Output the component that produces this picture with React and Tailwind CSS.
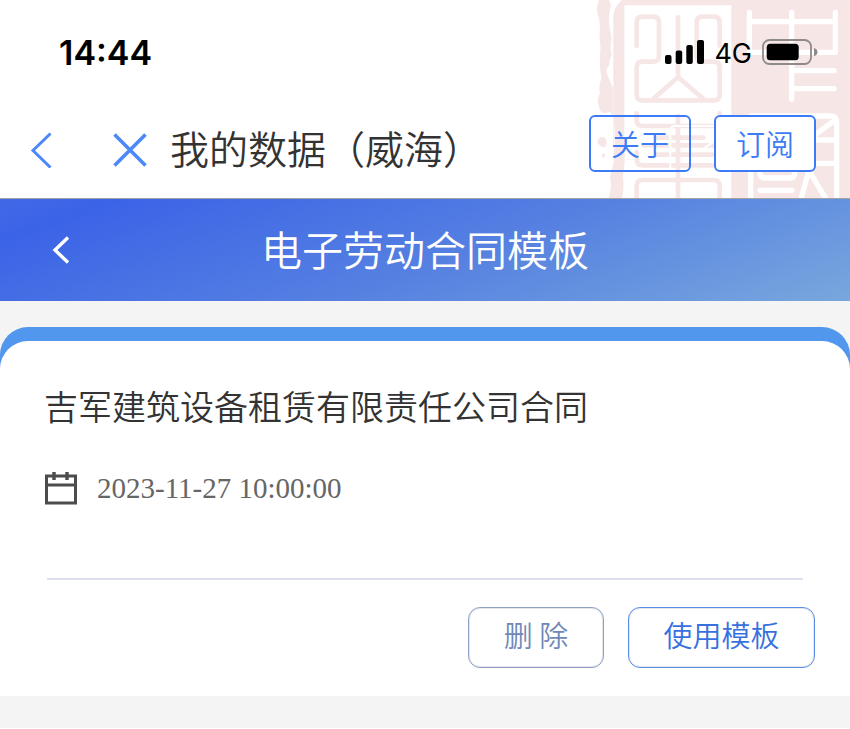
import { useState } from "react";

const contracts = [
	{
		id: 1,
		name: "吉军建筑设备租赁有限责任公司合同",
		date: "2023-11-27 10:00:00",
	},
];

function SealMark() {
	return (
		<svg
			className="absolute right-0 top-0 h-full w-[260px]"
			viewBox="0 0 780 594"
			preserveAspectRatio="xMaxYMin slice"
			fill="none"
			aria-hidden="true"
		>
			{/* rough left edge */}
			<path
				fill="#f6e6e6"
				d="M28 0H56Q66 12 60 30Q54 60 60 90Q68 116 62 130Q60 150 66 166Q56 180 58 196Q46 206 50 218Q58 240 68 262Q72 282 70 300V594H58Q66 560 60 530Q74 490 70 450Q76 400 70 350Q60 330 50 338Q30 344 26 316Q20 300 30 280Q24 262 34 236Q28 200 30 170Q34 140 28 110Q34 70 22 40Q18 18 28 0Z"
			/>
			<path fill="#f6e6e6" d="M30 412Q44 408 50 422Q52 440 42 442Q24 438 22 424ZM36 462Q46 458 46 468Q40 476 36 470Z" />
			<path
				fill="#f6e6e6"
				d="M96 0H780V594H56Q68 560 62 530Q74 500 72 460Q78 400 70 350V60Q66 24 96 0Z"
			/>
			<path fill="#fff" d="M103 16H424V594H96Q104 560 98 530Q106 500 103 440Z" />

			{/* left column strokes */}
			<g stroke="#f6e6e6" strokeWidth="14" strokeLinecap="round" strokeLinejoin="round">
				<path d="M140 137V68Q140 50 158 50H189Q207 50 207 68V168Q207 185 189 185H158Q140 185 140 203V284Q140 301 158 301H371Q389 301 389 284V203Q389 185 371 185H339Q320 185 320 168V68Q320 50 338 50H371Q389 50 389 68V137" />
				<path d="M264 52V232L190 296M264 232L340 296" />
				<path d="M140 340V360Q140 378 158 378H371Q389 378 389 360V340" />
				<path d="M264 348V594" />
				<path d="M200 413H340M160 436H389M200 464H389" />
				<path d="M140 456V476Q140 496 158 496H389" />
				<path d="M140 594V558Q140 540 158 540H371Q389 540 389 558V594" />
			</g>
			<path stroke="#fff" strokeWidth="6" d="M241 505V392Q241 378 255 378H372M330 424H374L330 452" />

			{/* right column strokes */}
			<g stroke="#fff" strokeWidth="16" strokeLinecap="round" strokeLinejoin="round">
				<path d="M478 37V157H736V37M478 65H736" />
				<path d="M605 37V298M605 212H732M605 266H732" />
				<path d="M482 594V348H722Q740 348 740 366V594" />
				<path d="M660 416L730 364M660 420H738M660 490H738" />
				<path d="M510 500V518Q510 534 526 534H598Q614 534 614 518V500M510 571H606" />
				<path d="M634 594L654 520M662 520L706 594" />
			</g>
		</svg>
	);
}

function StatusIcons() {
	return (
		<div className="flex items-center gap-2.5">
			<svg className="h-6 w-[39px]" viewBox="0 0 39 24" aria-hidden="true">
				<rect x="0" y="15" width="6.5" height="9" rx="2" />
				<rect x="10.7" y="10.5" width="6.5" height="13.5" rx="2" />
				<rect x="21.3" y="5" width="6.5" height="19" rx="2" />
				<rect x="32" y="0" width="7" height="24" rx="2" />
			</svg>
			<span className="pt-1 text-[27px] leading-8">4G</span>
			<svg className="h-[26px] w-[56px]" viewBox="0 0 56 26" fill="none" aria-hidden="true">
				<rect x="1" y="1" width="48" height="24" rx="6.5" stroke="#8f8a8a" strokeWidth="1.8" />
				<rect x="4.7" y="4.7" width="32" height="16.6" rx="3.5" fill="#000" />
				<path d="M52 9Q55.5 10 55.5 13T52 17Z" fill="#8f8a8a" />
			</svg>
		</div>
	);
}

function NavButton({ className, children }) {
	return (
		<button
			className={`h-[57px] w-[102px] rounded-md border-2 border-[#3b7cf6] pb-0.5 text-[29px] leading-10 text-[#3b7cf6] ${className}`}
		>
			{children}
		</button>
	);
}

function ContractCard({ contract, onDelete }) {
	return (
		<article className="rounded-t-[28px] bg-[#5197ed] pt-3.5">
			<div className="rounded-t-[28px] bg-white pb-7 pt-[42px]">
				<h2 className="px-11 text-[34px] leading-[46px] text-[#333]">{contract.name}</h2>
				<div className="mt-[39px] flex items-center gap-5 px-11">
					<svg
						className="h-[34px] w-[33px]"
						viewBox="0 0 33 34"
						fill="none"
						stroke="#4c4c4c"
						strokeWidth="3"
						aria-hidden="true"
					>
						<path d="M2.5 5H31.5V32H2.5ZM2.5 14H31.5" />
						<path d="M10 1V9M23 1V9" strokeWidth="3.4" />
					</svg>
					<time className="font-['Liberation_Serif',serif] text-[29px] font-normal leading-10 text-[#666]">
						{contract.date}
					</time>
				</div>
				<hr className="mx-[47px] mt-[70px] border-t-2 border-[#dce0ec]" />
				<div className="mt-[27px] flex justify-end gap-6 pr-[35px]">
					<button
						onClick={onDelete}
						className="h-[61px] w-[136px] rounded-xl border border-[#8da0c3] bg-white pb-2 text-[29px] leading-10 text-[#6f88b7] ring-1 ring-inset ring-gray-200"
					>
						删 除
					</button>
					<button className="h-[61px] w-[187px] rounded-xl border border-[#5c8de5] bg-white pb-2 text-[29px] leading-10 text-[#3870e0] ring-1 ring-inset ring-gray-200">
						使用模板
					</button>
				</div>
			</div>
		</article>
	);
}

export default function App() {
	const [items, setItems] = useState(contracts);

	const handleDelete = (id) => {
		setItems(items.filter((item) => item.id !== id));
	};

	return (
		<div className="bg-white font-['Noto_Sans_CJK_SC',sans-serif] font-[350]">
			{/* Status bar + browser nav */}
			<header className="relative border-b border-[#a3a3a3] pb-[26px]">
				<SealMark />
				<div className="relative flex h-[104px] items-center justify-between pl-[59px] pr-8 font-['Inter',sans-serif] font-normal text-black">
					<span className="pt-0.5 text-[34px] font-semibold leading-10">14:44</span>
					<StatusIcons />
				</div>
				<div className="relative mt-[11px] flex h-[57px] items-center pl-[30px] pr-[34px]">
					<div className="flex items-center gap-[61px] pt-3">
						<button aria-label="返回">
							<svg className="h-9 w-[22px]" viewBox="0 0 22 36" fill="none" stroke="#4c88fa" strokeWidth="3">
								<path d="M20.5 1.5L3 18.5L20.5 35.5" />
							</svg>
						</button>
						<button aria-label="关闭">
							<svg className="size-[34px]" viewBox="0 0 34 34" fill="none" stroke="#4c88fa" strokeWidth="3.6">
								<path d="M1.5 1.5L32.5 32.5M32.5 1.5L1.5 32.5" />
							</svg>
						</button>
					</div>
					<h1 className="ml-[23px] flex-1 pt-2 text-[39px] leading-[51px] text-[#333]">
						我的数据（威海）
					</h1>
					<div className="flex gap-[23px]">
						<NavButton className="bg-transparent">关于</NavButton>
						<NavButton className="bg-white">订阅</NavButton>
					</div>
				</div>
			</header>

			{/* Page title */}
			<div className="grid h-[102px] grid-cols-[100px_1fr_100px] items-center bg-[linear-gradient(160deg,#4169e6_0%,#3b63e7_10%,#5681e1_55%,#78a7dd_100%)] text-white">
				<button aria-label="返回" className="pl-[52px]">
					<svg className="h-7 w-[18px]" viewBox="0 0 18 28" fill="none" stroke="currentColor" strokeWidth="3.4">
						<path d="M16 1.5L3 14L16 26.5" />
					</svg>
				</button>
				<h2 className="pb-1 text-center text-[41px] leading-[60px]">电子劳动合同模板</h2>
			</div>

			{/* Template list */}
			<main className="bg-[#f4f4f4] pb-8 pt-[26px]">
				{items.map((item) => (
					<ContractCard
						key={item.id}
						contract={item}
						onDelete={() => handleDelete(item.id)}
					/>
				))}
			</main>
		</div>
	);
}
